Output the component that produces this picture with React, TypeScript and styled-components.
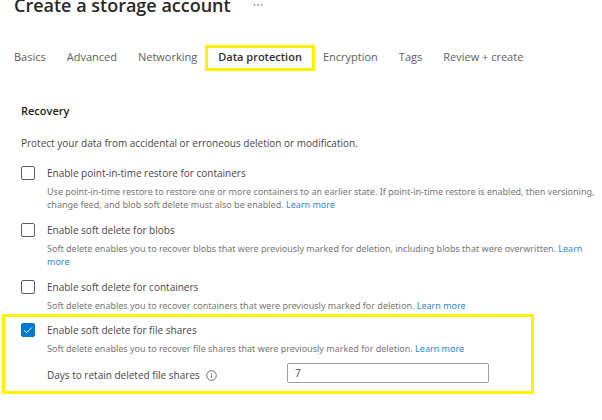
import React, { useState } from "react";
import styled, { createGlobalStyle } from "styled-components";

const GlobalStyle = createGlobalStyle`
  * { box-sizing: border-box; }
  html, body { margin: 0; background: #fff; }
  body {
    font-family: "Open Sans", "Noto Sans", sans-serif;
    font-size: 10px;
    line-height: 16px;
    color: #484644;
    overflow-x: hidden;
  }
`;

const Page = styled.main`
  display: flex;
  flex-direction: column;
`;

const Header = styled.header`
  display: flex;
  align-items: center;
  gap: 20px;
  height: 32px;
  margin-top: -11px;
  padding: 0 14px;
`;

const Title = styled.h1`
  margin: 0;
  font-size: 18px;
  line-height: 32px;
  font-weight: 600;
  color: #292827;
`;

const MoreButton = styled.button`
  display: flex;
  padding: 2px;
  border: 0;
  background: none;
  color: #605e5c;
`;

const TabBar = styled.nav`
  display: flex;
  gap: 21px;
  margin-top: 24px;
  padding: 4px 14px;
`;

const Tab = styled.a<{ $active?: boolean }>`
  position: relative;
  font-size: 11px;
  line-height: 16px;
  white-space: nowrap;
  text-decoration: none;
  color: ${(p) => (p.$active ? "#323130" : "#605e5c")};
  font-weight: ${(p) => (p.$active ? 600 : 400)};
`;

const TabMarker = styled.span`
  position: absolute;
  inset: -4px -13px -6px;
  border: 3px solid #fff200;
  pointer-events: none;
`;

const Section = styled.section`
  display: flex;
  flex-direction: column;
  margin-top: 34px;
`;

const SectionTitle = styled.h2`
  margin: 0;
  padding-left: 21px;
  font-size: 11px;
  line-height: 16px;
  font-weight: 600;
  color: #201f1e;
`;

const Intro = styled.p`
  margin: 16px 0 14px;
  padding-left: 21px;
`;

const OptionList = styled.div`
  display: flex;
  flex-direction: column;
  gap: 11px;
  padding-left: 21px;
`;

const Option = styled.div`
  display: grid;
  grid-template-columns: 14px 1fr;
  column-gap: 12px;
  row-gap: 4px;
  align-items: center;
`;

const Check = styled.input`
  appearance: none;
  width: 14px;
  height: 14px;
  margin: 0;
  border: 1px solid #605e5c;
  border-radius: 2px;
  background: #fff;

  &:checked {
    border-color: #0078d4;
    background: #0078d4;
  }
`;

const CheckCell = styled.span`
  display: grid;

  & > * { grid-area: 1 / 1; }
  & > svg { pointer-events: none; }
`;

const Description = styled.p`
  grid-column: 2;
  margin: 0;
  font-family: "Noto Sans", "Open Sans", sans-serif;
  font-size: 9px;
  line-height: 13px;
  color: #797775;
`;

const Link = styled.a`
  color: #2b88d8;
  text-decoration: none;
`;

const Highlight = styled.div`
  max-width: 532px;
  margin: 2px 2px 0;
  padding: 5px 16px 8px;
  border: 3px solid #fff200;
`;

const RetentionRow = styled.div`
  display: grid;
  grid-template-columns: 240px minmax(0, 202px);
  align-items: end;
  margin-top: 8px;
  padding-left: 26px;
`;

const RetentionLabel = styled.div`
  display: flex;
  align-items: center;
  gap: 6px;
  line-height: 16px;
`;

const DaysInput = styled.input`
  width: 100%;
  height: 20px;
  padding: 0 7px;
  border: 1px solid #a19f9d;
  border-radius: 2px;
  font: inherit;
  color: #484644;
  background: #fff;
`;

const tabs = [
  "Basics",
  "Advanced",
  "Networking",
  "Data protection",
  "Encryption",
  "Tags",
  "Review + create",
];

type OptionProps = { id: string; label: string; text: string; initial?: boolean };

const options: OptionProps[] = [
  {
    id: "restore",
    label: "Enable point-in-time restore for containers",
    text: "Use point-in-time restore to restore one or more containers to an earlier state. If point-in-time restore is enabled, then versioning, change feed, and blob soft delete must also be enabled.",
  },
  {
    id: "blobs",
    label: "Enable soft delete for blobs",
    text: "Soft delete enables you to recover blobs that were previously marked for deletion, including blobs that were overwritten.",
  },
  {
    id: "containers",
    label: "Enable soft delete for containers",
    text: "Soft delete enables you to recover containers that were previously marked for deletion.",
  },
];

function CheckOption({ id, label, text, initial = false }: OptionProps) {
  const [checked, setChecked] = useState(initial);
  return (
    <Option>
      <CheckCell>
        <Check
          id={id}
          type="checkbox"
          checked={checked}
          onChange={(e) => setChecked(e.target.checked)}
        />
        {checked && (
          <svg width="14" height="14" viewBox="0 0 14 14" fill="none" stroke="#fff" aria-hidden="true">
            <path d="M3 7.2 5.6 9.8 11 4.4" />
          </svg>
        )}
      </CheckCell>
      <label htmlFor={id}>{label}</label>
      <Description>
        {text} <Link href="#learn">Learn more</Link>
      </Description>
    </Option>
  );
}

export default function App() {
  const [days, setDays] = useState("7");
  return (
    <Page>
      <GlobalStyle />
      <Header>
        <Title>Create a storage account</Title>
        <MoreButton aria-label="More actions">
          <svg width="10" height="4" viewBox="0 0 10 4" fill="currentColor" aria-hidden="true">
            <circle cx="1.5" cy="2" r=".8" />
            <circle cx="5" cy="2" r=".8" />
            <circle cx="8.5" cy="2" r=".8" />
          </svg>
        </MoreButton>
      </Header>
      <TabBar>
        {tabs.map((name) => {
          const active = name === "Data protection";
          return (
            <Tab key={name} href="#tab" $active={active} aria-current={active ? "page" : undefined}>
              {name}
              {active && <TabMarker />}
            </Tab>
          );
        })}
      </TabBar>
      <Section>
        <SectionTitle>Recovery</SectionTitle>
        <Intro>Protect your data from accidental or erroneous deletion or modification.</Intro>
        <OptionList>
          {options.map((o) => (
            <CheckOption key={o.id} {...o} />
          ))}
        </OptionList>
        <Highlight>
          <CheckOption
            id="shares"
            label="Enable soft delete for file shares"
            text="Soft delete enables you to recover file shares that were previously marked for deletion."
            initial
          />
          <RetentionRow>
            <RetentionLabel>
              <label htmlFor="days">Days to retain deleted file shares</label>
              <svg width="11" height="11" viewBox="0 0 11 11" fill="none" stroke="#605e5c" aria-hidden="true">
                <circle cx="5.5" cy="5.5" r="4.8" strokeWidth=".9" />
                <path d="M5.5 4.8v3.2M5.5 2.9v1" strokeWidth=".9" />
              </svg>
            </RetentionLabel>
            <DaysInput id="days" type="text" value={days} onChange={(e) => setDays(e.target.value)} />
          </RetentionRow>
        </Highlight>
      </Section>
    </Page>
  );
}
